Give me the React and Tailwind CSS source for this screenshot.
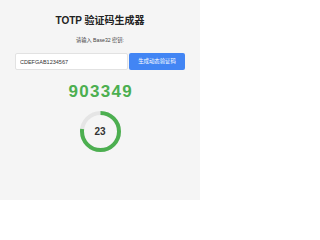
import React from 'react';

const Countdown = ({ seconds, total }) => {
    const r = 18.5;
    const c = 2 * Math.PI * r;
    const done = c * (seconds / total);
    return (
        <div className="relative w-[41px] h-[41px]">
            <svg width="41" height="41" viewBox="0 0 41 41" className="-rotate-90">
                <circle cx="20.5" cy="20.5" r={r} fill="none" stroke="#e5e5e5" strokeWidth="4" />
                <circle
                    cx="20.5"
                    cy="20.5"
                    r={r}
                    fill="none"
                    stroke="#4caf50"
                    strokeWidth="4"
                    strokeDasharray={`${done} ${c}`}
                />
            </svg>
            <div className="absolute inset-0 flex items-center justify-center text-[10px] font-bold text-[#333]">
                {seconds}
            </div>
        </div>
    );
};

const App = () => {
    return (
        <div
            className="w-[200px] h-[200px] overflow-hidden bg-[#f5f5f5] flex flex-col items-center px-[15px] pt-[15px]"
            style={{ fontFamily: '"Liberation Sans", "Noto Sans CJK SC", sans-serif' }}
        >
            <h1 className="text-[10px] leading-[12px] font-bold text-[#222]">TOTP 验证码生成器</h1>
            <p className="mt-[10px] text-[5.2px] leading-[6px] text-[#444]">请输入 Base32 密钥:</p>

            <div className="mt-[10px] flex w-full gap-[1px]">
                <input
                    className="flex-1 min-w-0 h-[17px] bg-white border border-[#e2e2e2] rounded-[2px] px-[4px] text-[5.5px] text-[#333] outline-none"
                    defaultValue="CDEFGAB1234567"
                />
                <button className="w-[56px] h-[17px] bg-[#4285f4] rounded-[2px] text-white text-[5.4px]">
                    生成动态验证码
                </button>
            </div>

            <div className="mt-[13px] text-[17px] leading-[17px] font-bold tracking-[1.3px] text-[#4caf50] pl-[1.3px]">
                903349
            </div>

            <div className="mt-[11px]">
                <Countdown seconds={23} total={30} />
            </div>
        </div>
    );
};

export default App;
